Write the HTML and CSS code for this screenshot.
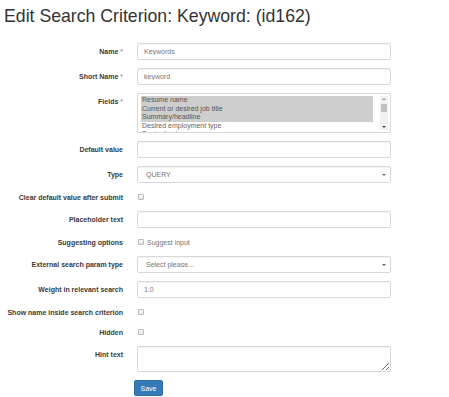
FILE: index.html
```html
<!DOCTYPE html>
<html>
<head>
<meta charset="utf-8">
<link rel="stylesheet" href="styles.css">
</head>
<body>
<div class="page">
  <h1 class="title">Edit Search Criterion: Keyword: (id162)</h1>
  <form class="form">
    <label class="lbl">Name <span class="req">*</span></label>
    <div class="ctrl"><input class="inp" type="text" value="Keywords"></div>

    <label class="lbl">Short Name <span class="req">*</span></label>
    <div class="ctrl"><input class="inp" type="text" value="keyword"></div>

    <label class="lbl">Fields <span class="req">*</span></label>
    <div class="ctrl">
      <div class="listbox">
        <div class="options">
          <div class="opt sel">Resume name</div>
          <div class="opt sel">Current or desired job title</div>
          <div class="opt sel">Summary/headline</div>
          <div class="opt">Desired employment type</div>
          <div class="opt">Desired salary</div>
        </div>
        <div class="scrollbar">
          <span class="arr up"></span>
          <span class="thumb"></span>
          <span class="arr down"></span>
        </div>
      </div>
    </div>

    <label class="lbl">Default value</label>
    <div class="ctrl"><input class="inp" type="text"></div>

    <label class="lbl">Type</label>
    <div class="ctrl"><div class="inp sel-box">QUERY<span class="caret"></span></div></div>

    <label class="lbl cb-lbl">Clear default value after submit</label>
    <div class="ctrl cb-row"><span class="cb"></span></div>

    <label class="lbl">Placeholder text</label>
    <div class="ctrl"><input class="inp" type="text"></div>

    <label class="lbl cb-lbl">Suggesting options</label>
    <div class="ctrl cb-row"><span class="cb"></span><span class="cb-text">Suggest input</span></div>

    <label class="lbl">External search param type</label>
    <div class="ctrl"><div class="inp sel-box">Select please...<span class="caret"></span></div></div>

    <label class="lbl">Weight in relevant search</label>
    <div class="ctrl"><input class="inp" type="text" value="1.0"></div>

    <label class="lbl cb-lbl">Show name inside search criterion</label>
    <div class="ctrl cb-row"><span class="cb"></span></div>

    <label class="lbl cb-lbl">Hidden</label>
    <div class="ctrl cb-row"><span class="cb"></span></div>

    <label class="lbl">Hint text</label>
    <div class="ctrl"><textarea class="inp area"></textarea></div>

    <div></div>
    <div class="ctrl"><button type="button" class="btn">Save</button></div>
  </form>
</div>
</body>
</html>
```

FILE: styles.css
```css
html, body {
  margin: 0;
  padding: 0;
  background: #fff;
  font-family: "Liberation Sans", Arial, sans-serif;
  color: #333;
}
.page {
  padding: 0 4px;
}
.title {
  margin: 6px 0 0;
  font-size: 17.7px;
  line-height: 20px;
  font-weight: normal;
  color: #333;
}
.form {
  display: grid;
  grid-template-columns: 119px 254px;
  column-gap: 14px;
  row-gap: 8px;
  margin-top: 17px;
}
.lbl {
  font-size: 7px;
  line-height: 9px;
  font-weight: bold;
  color: #3a3a3a;
  text-align: right;
  padding-top: 4px;
  white-space: nowrap;
}
.req {
  color: #d9534f;
  font-weight: normal;
}
.cb-lbl {
  padding-top: 2px;
}
.ctrl {
  min-width: 0;
}
.inp {
  display: block;
  box-sizing: border-box;
  width: 254px;
  height: 17px;
  margin: 0;
  padding: 0 6px;
  border: 1px solid #d9d9d9;
  border-radius: 2px;
  box-shadow: inset 0 1px 1px rgba(0,0,0,.05);
  background: #fff;
  font-family: "Liberation Sans", Arial, sans-serif;
  font-size: 7px;
  color: #777;
  outline: none;
}
.sel-box {
  position: relative;
  line-height: 15px;
  padding-left: 8px;
}
.caret {
  position: absolute;
  right: 4px;
  top: 7px;
  width: 0;
  height: 0;
  border-left: 2px solid transparent;
  border-right: 2px solid transparent;
  border-top: 2px solid #666;
}
.area {
  height: 26px;
  resize: vertical;
  padding: 2px 6px;
}
.listbox {
  box-sizing: border-box;
  width: 254px;
  height: 40px;
  border: 1px solid #d9d9d9;
  border-radius: 2px;
  display: flex;
  overflow: hidden;
  background: #fff;
}
.options {
  flex: 1;
  padding: 2px 0 0 3px;
  overflow: hidden;
}
.opt {
  font-size: 7px;
  line-height: 8.5px;
  color: #666;
  padding-left: 1px;
  white-space: nowrap;
}
.opt.sel {
  background: #cecece;
  color: #555;
  margin-right: 7px;
}
.scrollbar {
  width: 8px;
  margin: 2px 2px 2px 0;
  background: #f1f1f1;
  position: relative;
}
.arr {
  position: absolute;
  left: 2px;
  width: 0;
  height: 0;
  border-left: 2px solid transparent;
  border-right: 2px solid transparent;
}
.arr.up {
  top: 2px;
  border-bottom: 2px solid #a3a3a3;
}
.arr.down {
  bottom: 2px;
  border-top: 2px solid #505050;
}
.thumb {
  position: absolute;
  left: 1px;
  right: 1px;
  top: 8px;
  height: 8px;
  background: #c1c1c1;
}
.cb-row {
  height: 12px;
  display: flex;
  align-items: center;
}
.cb {
  box-sizing: border-box;
  width: 6px;
  height: 6px;
  margin-left: 1px;
  border: 1px solid #bdbdbd;
  border-radius: 1px;
  background: linear-gradient(#fafafa, #e4e4e4);
}
.cb-text {
  font-size: 7px;
  color: #777;
  margin-left: 3px;
}
.btn {
  display: block;
  margin: 0 0 0 -3px;
  width: 29px;
  height: 16px;
  padding: 0;
  background: #337ab7;
  border: 1px solid #2e6da4;
  border-radius: 2px;
  color: #fff;
  font-family: "Liberation Sans", Arial, sans-serif;
  font-size: 7px;
}
```
